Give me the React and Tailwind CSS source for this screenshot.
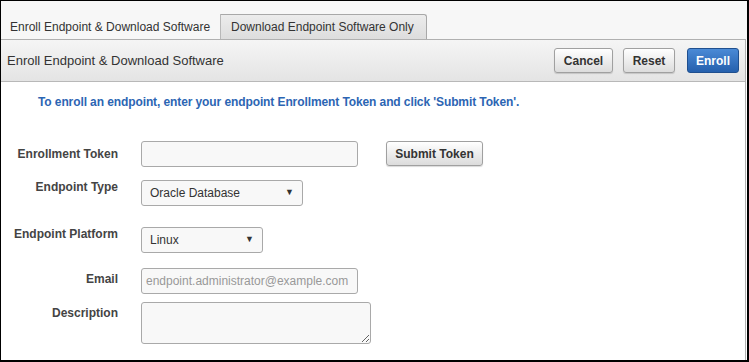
export default function App() {
  const label = "w-[117px] shrink-0 text-right text-[12px] font-bold text-[#444]";
  const field =
    "h-[26px] border border-[#a9a9a9] rounded-[3px] bg-[#f8f8f8] text-[12px] text-[#333]";
  const btn =
    "h-[25px] px-[6px] whitespace-nowrap rounded-[3px] border border-[#a0a0a0] bg-gradient-to-b from-[#ffffff] to-[#dcdcdc] text-[12px] font-bold text-[#333] shadow-[0_1px_1px_rgba(0,0,0,0.15)]";

  return (
    <div className="w-[749px] h-[362px] overflow-hidden bg-white border-l border-t border-black border-r-2 border-b-2 font-['Liberation_Sans',Arial,sans-serif]">
      {/* tabs */}
      <div className="h-[38px] bg-[#f7f7f7] flex items-end">
        <div className="h-[25px] w-[220px] bg-[#f7f7f7] border-r border-[#b8b8b8] flex items-center pl-[9px] text-[12px] text-[#333]">
          Enroll Endpoint &amp; Download Software
        </div>
        <div className="h-[25px] w-[206px] bg-gradient-to-b from-[#ececec] to-[#dddddd] border-t border-r border-[#a8a8a8] rounded-tr-[3px] flex items-center pl-[10px] text-[12px] text-[#333]">
          Download Endpoint Software Only
        </div>
      </div>

      {/* panel */}
      <div className="border-t border-r border-[#b0b0b0] mr-[1px] h-[322px]">
        <div className="h-[42px] bg-gradient-to-b from-[#f5f5f5] to-[#e4e4e4] border-b border-[#b8b8b8] flex items-center justify-between pl-[6px] pr-[6px]">
          <span className="text-[13px] text-[#333]">Enroll Endpoint &amp; Download Software</span>
          <div className="flex items-center gap-[10px]">
            <button className={btn + " w-[59px]"}>Cancel</button>
            <button className={btn + " w-[52px]"}>Reset</button>
            <button className="h-[25px] w-[52px] ml-[2px] rounded-[3px] border border-[#1f4f8f] bg-gradient-to-b from-[#4a8ad6] to-[#2560ad] text-[12px] font-bold text-white">
              Enroll
            </button>
          </div>
        </div>

        <div className="pt-[11px]">
          <p className="pl-[37px] text-[12px] font-bold text-[#2c65b3] tracking-[-0.1px]">
            To enroll an endpoint, enter your endpoint Enrollment Token and click 'Submit Token'.
          </p>

          <div className="mt-[30px] flex flex-col">
            <div className="flex items-start">
              <span className={label + " leading-[14px] pt-[6px]"}>Enrollment Token</span>
              <input className={field + " ml-[23px] w-[217px]"} />
              <button className={btn + " ml-[28px] w-[97px] h-[24px]"}>Submit Token</button>
            </div>

            <div className="flex items-start mt-[13px]">
              <span className={label + " leading-[14px]"}>Endpoint Type</span>
              <div className={field + " ml-[23px] w-[162px] flex items-center justify-between px-[8px]"}>
                <span>Oracle Database</span>
                <span className="text-[9px]">▼</span>
              </div>
            </div>

            <div className="flex items-start mt-[21px]">
              <span className={label + " leading-[14px]"}>Endpoint Platform</span>
              <div className={field + " ml-[23px] w-[122px] flex items-center justify-between px-[8px]"}>
                <span>Linux</span>
                <span className="text-[9px]">▼</span>
              </div>
            </div>

            <div className="flex items-start mt-[15px]">
              <span className={label + " leading-[14px] pt-[4px]"}>Email</span>
              <input
                className={field + " ml-[23px] w-[217px] px-[4px] placeholder:text-[#999]"}
                placeholder="endpoint.administrator@example.com"
              />
            </div>

            <div className="flex items-start mt-[8px]">
              <span className={label + " leading-[14px] pt-[4px]"}>Description</span>
              <textarea className={field + " ml-[23px] w-[230px] h-[42px]"} />
            </div>
          </div>
        </div>
      </div>
    </div>
  );
}
